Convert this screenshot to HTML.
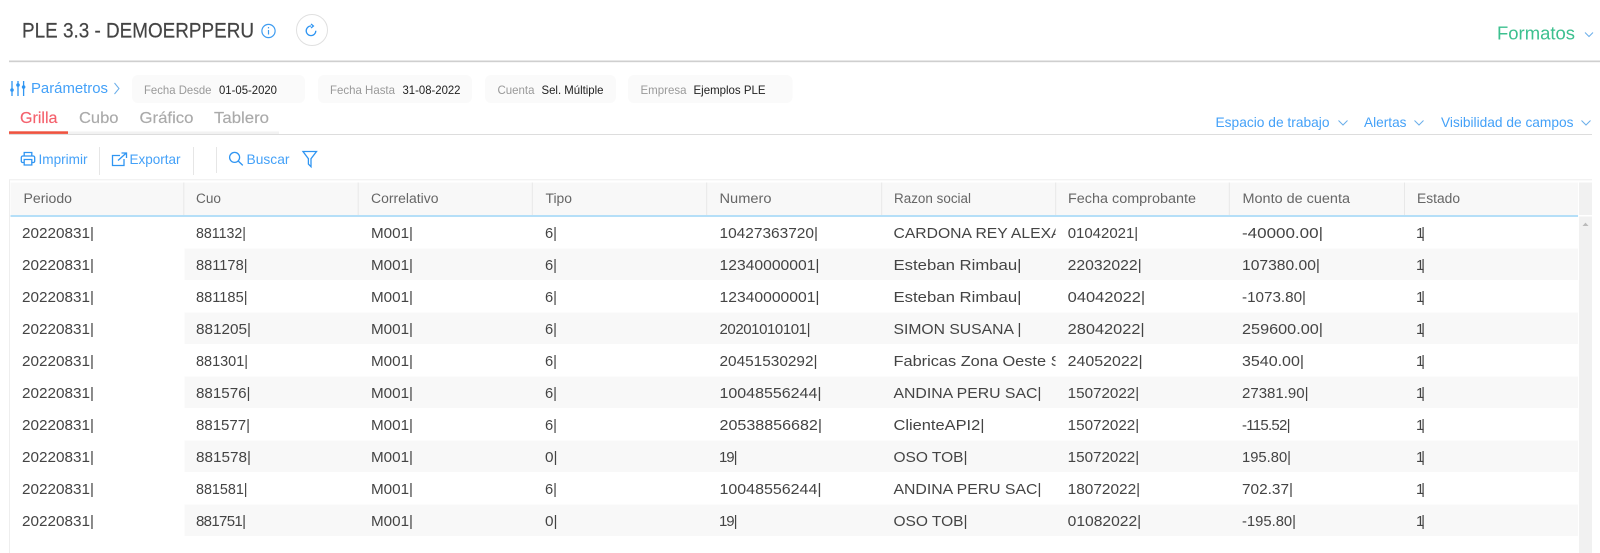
<!DOCTYPE html>
<html lang="es">
<head>
<meta charset="utf-8">
<title>PLE 3.3 - DEMOERPPERU</title>
<style>
html,body{margin:0;padding:0;background:#fff;width:1600px;height:553px;overflow:hidden}
svg{display:block}
text{font-family:"Liberation Sans",Arial,sans-serif;white-space:pre}
.d text{font-size:15px;fill:#444}
.h text{font-size:13.5px;fill:#666}
.l{font-size:12px;fill:#999}
.v{font-size:12px;fill:#222}
.b{font-size:14px;fill:#44a1f8}
.t{font-size:16px;fill:#aaa;stroke:#aaa;stroke-width:.15}
.ic{fill:none;stroke:#2f95f2;stroke-width:1.3}
.ch{fill:none;stroke:#6aaeea;stroke-width:1}
.p{fill:#fafafa}
.sep{stroke:#e8e8e8;stroke-width:1}
.band{fill:#f8f8f8}
</style>
</head>
<body>
<svg width="1600" height="553" viewBox="0 0 1600 553" xmlns="http://www.w3.org/2000/svg">
<defs><clipPath id="rz"><rect x="890" y="210" width="165.5" height="340"/></clipPath></defs>
<rect width="1600" height="553" fill="#fff"/>

<!-- Header -->
<text x="22" y="37.5" font-size="21" fill="#444" stroke="#444" stroke-width=".2" textLength="232" lengthAdjust="spacingAndGlyphs">PLE 3.3 - DEMOERPPERU</text>
<circle cx="268.5" cy="31" r="6.6" fill="none" stroke="#3f9cf0" stroke-width="1.2"/>
<path d="M268.5 30v4.5M268.5 27v1.4" stroke="#3f9cf0" stroke-width="1.2" fill="none"/>
<circle cx="312" cy="30" r="15.5" fill="#fff" stroke="#e0e0e0" stroke-width="1"/>
<path d="M311 26A4.8 4.8 0 1 0 315.8 30.8" class="ic"/>
<path d="M311 24l2.4 2-2.4 2" class="ic" stroke-width="1"/>
<text x="1497" y="39.5" font-size="18" fill="#3cc08f" textLength="78" lengthAdjust="spacingAndGlyphs">Formatos</text>
<path d="M1585 32.5l4 4 4-4" class="ch"/>
<rect x="9" y="60.5" width="1591" height="1.7" fill="#cfcfcf"/>

<!-- Params -->
<path d="M12 81v15M18 81v15M23.6 81v15" class="ic"/>
<circle cx="12" cy="90" r="1.8" fill="#2f95f2"/><circle cx="18" cy="85" r="1.8" fill="#2f95f2"/><circle cx="23.6" cy="87" r="1.8" fill="#2f95f2"/>
<text x="31" y="93" font-size="15" fill="#44a1f8" textLength="77" lengthAdjust="spacingAndGlyphs">Parámetros</text>
<path d="M114.5 83l4.5 5.5-4.5 5.5" class="ch"/>

<rect class="p" x="132" y="75" width="173" height="28" rx="6"/>
<text class="l" x="144" y="94" textLength="67.5" lengthAdjust="spacingAndGlyphs">Fecha Desde</text>
<text class="v" x="219" y="94" textLength="58" lengthAdjust="spacingAndGlyphs">01-05-2020</text>
<rect class="p" x="318" y="75" width="154" height="28" rx="6"/>
<text class="l" x="330" y="94" textLength="65" lengthAdjust="spacingAndGlyphs">Fecha Hasta</text>
<text class="v" x="402.5" y="94" textLength="58" lengthAdjust="spacingAndGlyphs">31-08-2022</text>
<rect class="p" x="485" y="75" width="131" height="28" rx="6"/>
<text class="l" x="497.5" y="94" textLength="37" lengthAdjust="spacingAndGlyphs">Cuenta</text>
<text class="v" x="541.5" y="94" textLength="62" lengthAdjust="spacingAndGlyphs">Sel. Múltiple</text>
<rect class="p" x="628" y="75" width="164.5" height="28" rx="6"/>
<text class="l" x="640.5" y="94" textLength="46" lengthAdjust="spacingAndGlyphs">Empresa</text>
<text class="v" x="693.5" y="94" textLength="72" lengthAdjust="spacingAndGlyphs">Ejemplos PLE</text>

<!-- Tabs -->
<text class="t" x="20" y="123" style="fill:#f4606c;stroke:#f4606c" textLength="37.5" lengthAdjust="spacingAndGlyphs">Grilla</text>
<text class="t" x="79" y="123" textLength="39.5" lengthAdjust="spacingAndGlyphs">Cubo</text>
<text class="t" x="139.5" y="123" textLength="54" lengthAdjust="spacingAndGlyphs">Gráfico</text>
<text class="t" x="214" y="123" textLength="55" lengthAdjust="spacingAndGlyphs">Tablero</text>
<rect x="68" y="131.5" width="211" height="2.5" fill="#f2f2f2"/>
<rect x="9" y="131.3" width="59" height="2.6" fill="#ee5340"/>
<rect x="9" y="134" width="1583" height="1" fill="#ddd"/>

<text class="b" x="1215.5" y="127" textLength="114" lengthAdjust="spacingAndGlyphs">Espacio de trabajo</text>
<path d="M1338.5 120.5l4.5 4.5 4.5-4.5" class="ch"/>
<text class="b" x="1364" y="127" textLength="42.5" lengthAdjust="spacingAndGlyphs">Alertas</text>
<path d="M1414.5 120.5l4.5 4.5 4.5-4.5" class="ch"/>
<text class="b" x="1441" y="127" textLength="132.5" lengthAdjust="spacingAndGlyphs">Visibilidad de campos</text>
<path d="M1581.5 120.5l4.5 4.5 4.5-4.5" class="ch"/>

<!-- Toolbar -->
<path d="M24.2 156v-3.5h7.6v3.5M24 162.5h-1.5a1.5 1.5 0 0 1-1.2-1.5v-3.5a1.5 1.5 0 0 1 1.5-1.5h10.4a1.5 1.5 0 0 1 1.5 1.5V161a1.5 1.5 0 0 1-1.2 1.5H32M24.2 159.5h7.6v5.5h-7.6z" class="ic" stroke-width="1.6"/>
<text class="b" x="38.5" y="164" textLength="49" lengthAdjust="spacingAndGlyphs">Imprimir</text>
<path d="M99.5 147v28" stroke="#e6e6e6"/>
<path d="M120 155.5h-7.5v10h11.5v-6.5M118 160.5l8.3-7.5M121.5 153h5v5" class="ic"/>
<text class="b" x="129.5" y="164" textLength="51" lengthAdjust="spacingAndGlyphs">Exportar</text>
<path d="M193.5 147v28M216.5 147v26" stroke="#e6e6e6"/>
<circle cx="234.6" cy="157.4" r="5" class="ic" stroke-width="1.7"/>
<path d="M238.2 161l4.6 4.4" class="ic" stroke-width="2"/>
<text class="b" x="246.5" y="164" textLength="43" lengthAdjust="spacingAndGlyphs">Buscar</text>
<path d="M303 151.5h13.5l-5.5 7.2v8l-2.6-2.6v-5.4z" class="ic" stroke-width="1"/>

<!-- Table frame -->
<path d="M9.5 553V179.7H1592" fill="none" stroke="#eee"/>
<rect x="10.5" y="182.5" width="1567.5" height="32.5" fill="#f8f8f8"/>
<rect x="10.5" y="215" width="1567.5" height="2" fill="#b5dff8"/>
<path class="sep" d="M183.8 182.5V215M358.2 182.5V215M532.3 182.5V215M706.7 182.5V215M881.7 182.5V215M1055.7 182.5V215M1229.3 182.5V215M1404.5 182.5V215"/>

<!-- Scrollbar -->
<rect x="1579" y="182.5" width="13" height="370.5" fill="#f1f1f1"/>
<rect x="1579" y="215" width="13" height="1.5" fill="#fff"/>
<path d="M1582.5 226l3-3.4 3 3.4z" fill="#bbb"/>

<!-- Row bands -->
<rect class="band" x="184.5" y="248.5" width="1393.5" height="31.5"/>
<rect class="band" x="184.5" y="312.5" width="1393.5" height="31.5"/>
<rect class="band" x="184.5" y="376.5" width="1393.5" height="31.5"/>
<rect class="band" x="184.5" y="440.5" width="1393.5" height="31.5"/>
<rect class="band" x="184.5" y="504.5" width="1393.5" height="31.5"/>

<!-- Table header -->
<g class="h">
<text x="23.5" y="203" textLength="48.5" lengthAdjust="spacingAndGlyphs">Periodo</text>
<text x="196" y="203" textLength="25" lengthAdjust="spacingAndGlyphs">Cuo</text>
<text x="371" y="203" textLength="67.5" lengthAdjust="spacingAndGlyphs">Correlativo</text>
<text x="545.5" y="203" textLength="26.5" lengthAdjust="spacingAndGlyphs">Tipo</text>
<text x="719.5" y="203" textLength="52" lengthAdjust="spacingAndGlyphs">Numero</text>
<text x="894" y="203" textLength="77" lengthAdjust="spacingAndGlyphs">Razon social</text>
<text x="1068" y="203" textLength="128" lengthAdjust="spacingAndGlyphs">Fecha comprobante</text>
<text x="1242.5" y="203" textLength="107.5" lengthAdjust="spacingAndGlyphs">Monto de cuenta</text>
<text x="1417" y="203" textLength="43" lengthAdjust="spacingAndGlyphs">Estado</text>
</g>

<!-- Rows -->
<g class="d">
<text x="22" y="238" textLength="72" lengthAdjust="spacingAndGlyphs">20220831|</text>
<text x="196" y="238" textLength="50" lengthAdjust="spacingAndGlyphs">881132|</text>
<text x="371" y="238" textLength="42" lengthAdjust="spacingAndGlyphs">M001|</text>
<text x="545" y="238" textLength="12" lengthAdjust="spacingAndGlyphs">6|</text>
<text x="719.5" y="238" textLength="98.5" lengthAdjust="spacingAndGlyphs">10427363720|</text>
<text x="893.5" y="238" clip-path="url(#rz)" textLength="168" lengthAdjust="spacingAndGlyphs">CARDONA REY ALEXA</text>
<text x="1067.7" y="238" textLength="70.5" lengthAdjust="spacingAndGlyphs">01042021|</text>
<text x="1242" y="238" textLength="81" lengthAdjust="spacingAndGlyphs">-40000.00|</text>
<text x="1416" y="238" textLength="9" lengthAdjust="spacing">1|</text>

<text x="22" y="270" textLength="72" lengthAdjust="spacingAndGlyphs">20220831|</text>
<text x="196" y="270" textLength="51.5" lengthAdjust="spacingAndGlyphs">881178|</text>
<text x="371" y="270" textLength="42" lengthAdjust="spacingAndGlyphs">M001|</text>
<text x="545" y="270" textLength="12" lengthAdjust="spacingAndGlyphs">6|</text>
<text x="719.5" y="270" textLength="100" lengthAdjust="spacingAndGlyphs">12340000001|</text>
<text x="893.5" y="270" textLength="128" lengthAdjust="spacingAndGlyphs">Esteban Rimbau|</text>
<text x="1067.7" y="270" textLength="74" lengthAdjust="spacingAndGlyphs">22032022|</text>
<text x="1242" y="270" textLength="78" lengthAdjust="spacingAndGlyphs">107380.00|</text>
<text x="1416" y="270" textLength="9" lengthAdjust="spacing">1|</text>

<text x="22" y="302" textLength="72" lengthAdjust="spacingAndGlyphs">20220831|</text>
<text x="196" y="302" textLength="51.5" lengthAdjust="spacingAndGlyphs">881185|</text>
<text x="371" y="302" textLength="42" lengthAdjust="spacingAndGlyphs">M001|</text>
<text x="545" y="302" textLength="12" lengthAdjust="spacingAndGlyphs">6|</text>
<text x="719.5" y="302" textLength="100" lengthAdjust="spacingAndGlyphs">12340000001|</text>
<text x="893.5" y="302" textLength="128" lengthAdjust="spacingAndGlyphs">Esteban Rimbau|</text>
<text x="1067.7" y="302" textLength="77.5" lengthAdjust="spacingAndGlyphs">04042022|</text>
<text x="1242" y="302" textLength="64" lengthAdjust="spacingAndGlyphs">-1073.80|</text>
<text x="1416" y="302" textLength="9" lengthAdjust="spacing">1|</text>

<text x="22" y="334" textLength="72" lengthAdjust="spacingAndGlyphs">20220831|</text>
<text x="196" y="334" textLength="55" lengthAdjust="spacingAndGlyphs">881205|</text>
<text x="371" y="334" textLength="42" lengthAdjust="spacingAndGlyphs">M001|</text>
<text x="545" y="334" textLength="12" lengthAdjust="spacingAndGlyphs">6|</text>
<text x="719.5" y="334" textLength="91" lengthAdjust="spacing">20201010101|</text>
<text x="893.5" y="334" textLength="128" lengthAdjust="spacingAndGlyphs">SIMON SUSANA |</text>
<text x="1067.7" y="334" textLength="77" lengthAdjust="spacingAndGlyphs">28042022|</text>
<text x="1242" y="334" textLength="81" lengthAdjust="spacingAndGlyphs">259600.00|</text>
<text x="1416" y="334" textLength="9" lengthAdjust="spacing">1|</text>

<text x="22" y="366" textLength="72" lengthAdjust="spacingAndGlyphs">20220831|</text>
<text x="196" y="366" textLength="52" lengthAdjust="spacingAndGlyphs">881301|</text>
<text x="371" y="366" textLength="42" lengthAdjust="spacingAndGlyphs">M001|</text>
<text x="545" y="366" textLength="12" lengthAdjust="spacingAndGlyphs">6|</text>
<text x="719.5" y="366" textLength="98" lengthAdjust="spacingAndGlyphs">20451530292|</text>
<text x="893.5" y="366" clip-path="url(#rz)" textLength="168" lengthAdjust="spacingAndGlyphs">Fabricas Zona Oeste S</text>
<text x="1067.7" y="366" textLength="75" lengthAdjust="spacingAndGlyphs">24052022|</text>
<text x="1242" y="366" textLength="62" lengthAdjust="spacingAndGlyphs">3540.00|</text>
<text x="1416" y="366" textLength="9" lengthAdjust="spacing">1|</text>

<text x="22" y="398" textLength="72" lengthAdjust="spacingAndGlyphs">20220831|</text>
<text x="196" y="398" textLength="54.5" lengthAdjust="spacingAndGlyphs">881576|</text>
<text x="371" y="398" textLength="42" lengthAdjust="spacingAndGlyphs">M001|</text>
<text x="545" y="398" textLength="12" lengthAdjust="spacingAndGlyphs">6|</text>
<text x="719.5" y="398" textLength="102" lengthAdjust="spacingAndGlyphs">10048556244|</text>
<text x="893.5" y="398" textLength="148" lengthAdjust="spacingAndGlyphs">ANDINA PERU SAC|</text>
<text x="1067.7" y="398" textLength="71.5" lengthAdjust="spacingAndGlyphs">15072022|</text>
<text x="1242" y="398" textLength="66.5" lengthAdjust="spacingAndGlyphs">27381.90|</text>
<text x="1416" y="398" textLength="9" lengthAdjust="spacing">1|</text>

<text x="22" y="430" textLength="72" lengthAdjust="spacingAndGlyphs">20220831|</text>
<text x="196" y="430" textLength="54" lengthAdjust="spacingAndGlyphs">881577|</text>
<text x="371" y="430" textLength="42" lengthAdjust="spacingAndGlyphs">M001|</text>
<text x="545" y="430" textLength="12" lengthAdjust="spacingAndGlyphs">6|</text>
<text x="719.5" y="430" textLength="102.5" lengthAdjust="spacingAndGlyphs">20538856682|</text>
<text x="893.5" y="430" textLength="91" lengthAdjust="spacingAndGlyphs">ClienteAPI2|</text>
<text x="1067.7" y="430" textLength="71.5" lengthAdjust="spacingAndGlyphs">15072022|</text>
<text x="1242" y="430" textLength="48.5" lengthAdjust="spacing">-115.52|</text>
<text x="1416" y="430" textLength="9" lengthAdjust="spacing">1|</text>

<text x="22" y="462" textLength="72" lengthAdjust="spacingAndGlyphs">20220831|</text>
<text x="196" y="462" textLength="55" lengthAdjust="spacingAndGlyphs">881578|</text>
<text x="371" y="462" textLength="42" lengthAdjust="spacingAndGlyphs">M001|</text>
<text x="545" y="462" textLength="12.5" lengthAdjust="spacingAndGlyphs">0|</text>
<text x="719" y="462" textLength="18.5" lengthAdjust="spacing">19|</text>
<text x="893.5" y="462" textLength="74" lengthAdjust="spacingAndGlyphs">OSO TOB|</text>
<text x="1067.7" y="462" textLength="71.5" lengthAdjust="spacingAndGlyphs">15072022|</text>
<text x="1242" y="462" textLength="49" lengthAdjust="spacingAndGlyphs">195.80|</text>
<text x="1416" y="462" textLength="9" lengthAdjust="spacing">1|</text>

<text x="22" y="494" textLength="72" lengthAdjust="spacingAndGlyphs">20220831|</text>
<text x="196" y="494" textLength="51.5" lengthAdjust="spacingAndGlyphs">881581|</text>
<text x="371" y="494" textLength="42" lengthAdjust="spacingAndGlyphs">M001|</text>
<text x="545" y="494" textLength="12" lengthAdjust="spacingAndGlyphs">6|</text>
<text x="719.5" y="494" textLength="102" lengthAdjust="spacingAndGlyphs">10048556244|</text>
<text x="893.5" y="494" textLength="148" lengthAdjust="spacingAndGlyphs">ANDINA PERU SAC|</text>
<text x="1067.7" y="494" textLength="72.5" lengthAdjust="spacingAndGlyphs">18072022|</text>
<text x="1242" y="494" textLength="51" lengthAdjust="spacingAndGlyphs">702.37|</text>
<text x="1416" y="494" textLength="9" lengthAdjust="spacing">1|</text>

<text x="22" y="526" textLength="72" lengthAdjust="spacingAndGlyphs">20220831|</text>
<text x="196" y="526" textLength="50" lengthAdjust="spacing">881751|</text>
<text x="371" y="526" textLength="42" lengthAdjust="spacingAndGlyphs">M001|</text>
<text x="545" y="526" textLength="12.5" lengthAdjust="spacingAndGlyphs">0|</text>
<text x="719" y="526" textLength="18.5" lengthAdjust="spacing">19|</text>
<text x="893.5" y="526" textLength="74" lengthAdjust="spacingAndGlyphs">OSO TOB|</text>
<text x="1067.7" y="526" textLength="73.5" lengthAdjust="spacingAndGlyphs">01082022|</text>
<text x="1242" y="526" textLength="54" lengthAdjust="spacingAndGlyphs">-195.80|</text>
<text x="1416" y="526" textLength="9" lengthAdjust="spacing">1|</text>
</g>
</svg>
</body>
</html>
